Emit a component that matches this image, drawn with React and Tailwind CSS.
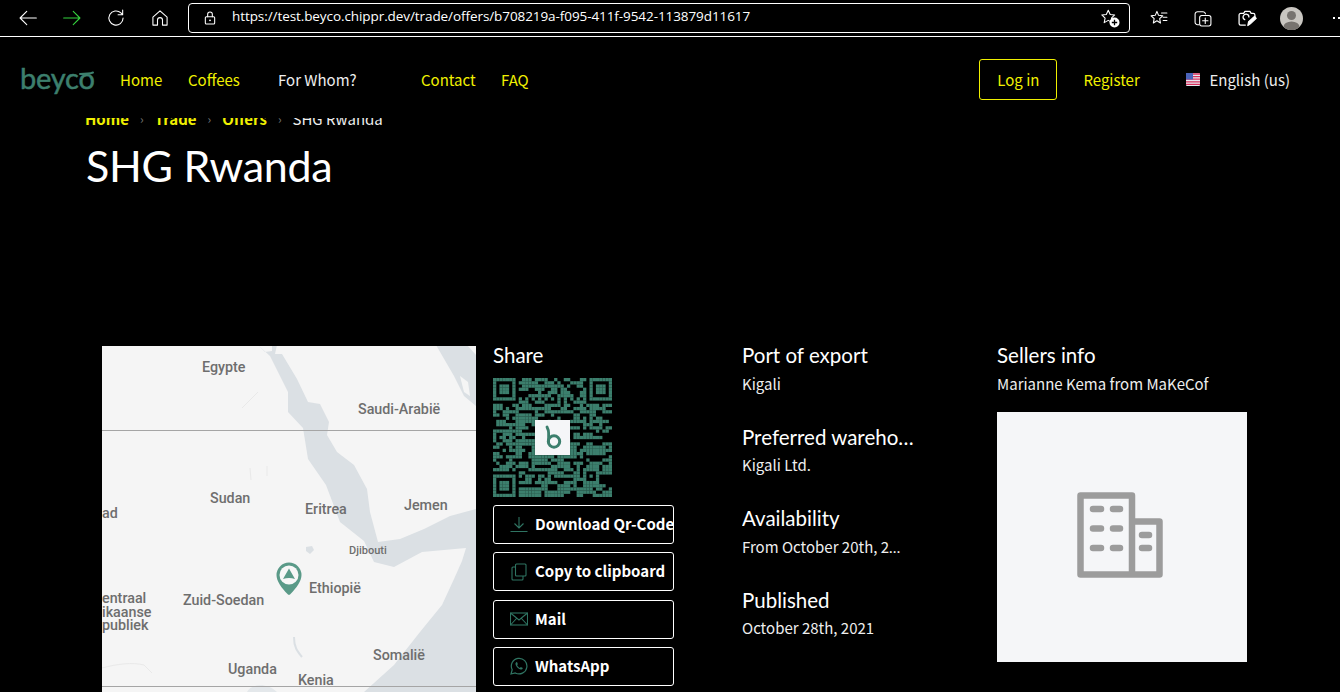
import React from "react";

const sans = "font-['Noto_Sans_CJK_KR','Noto_Sans',sans-serif]";
const head = "font-['Lato',sans-serif]";

const N = 37;
function qrCells() {
  const cells = [];
  let s = 20211028;
  const rnd = () => {
    s = (s * 1664525 + 1013904223) >>> 0;
    return (s >>> 16) / 65536;
  };
  const nearF = (x, y) => (x < 8 && y < 8) || (x >= N - 8 && y < 8) || (x < 8 && y >= N - 8);
  let prev = false;
  for (let y = 0; y < N; y++) {
    for (let x = 0; x < N; x++) {
      if (nearF(x, y)) continue;
      if (x >= 28 && x <= 32 && y >= 28 && y <= 32) {
        const e = x === 28 || x === 32 || y === 28 || y === 32 || (x === 30 && y === 30);
        if (e) cells.push([x, y]);
        continue;
      }
      if (y === 6 || x === 6) {
        if ((x + y) % 2 === 0) cells.push([x, y]);
        continue;
      }
      const on = rnd() < 0.4 ? prev : rnd() > 0.42;
      prev = on;
      if (on) cells.push([x, y]);
    }
  }
  [[0, 0], [N - 7, 0], [0, N - 7]].forEach(([fx, fy]) => {
    for (let y = fy; y < fy + 7; y++)
      for (let x = fx; x < fx + 7; x++) {
        const ring = x === fx || x === fx + 6 || y === fy || y === fy + 6;
        const core = x >= fx + 2 && x <= fx + 4 && y >= fy + 2 && y <= fy + 4;
        if (ring || core) cells.push([x, y]);
      }
  });
  return cells;
}

function QR() {
  return (
    <div className="relative h-[119px] w-[119px]">
      <svg viewBox={`0 0 ${N} ${N}`} className="block h-[119px] w-[119px]">
        {qrCells().map(([x, y]) => (
          <rect key={`${x}-${y}`} x={x} y={y} width="1.02" height="1.02" fill="#3c7f6d" />
        ))}
      </svg>
      <div className="absolute left-[42px] top-[42px] flex h-[35px] w-[35px] items-center justify-center bg-[#f5f6f8]">
        <svg width="35" height="35" viewBox="0 0 35 35" fill="none">
          <path d="M12 7c1 2 1.600 3.500 1.600 6v9" stroke="#3c7f6d" strokeWidth="2.800" strokeLinecap="round" />
          <circle cx="19" cy="21.500" r="5.700" stroke="#3c7f6d" strokeWidth="3" />
        </svg>
      </div>
    </div>
  );
}

const IconStroke = ({ children, size = 20, sw = 1.3, color = "#fff", vb = 24 }) => (
  <svg width={size} height={size} viewBox={`0 0 ${vb} ${vb}`} fill="none" stroke={color} strokeWidth={sw} strokeLinecap="round" strokeLinejoin="round">
    {children}
  </svg>
);

function Toolbar() {
  return (
    <div className="flex h-9 items-center">
      <div className="flex w-[188px] items-center pl-[18px]">
        <div className="w-[44px]">
          <IconStroke size={20}><path d="M22 12H3M10.500 4L2.500 12l8 8" /></IconStroke>
        </div>
        <div className="w-[44px]">
          <IconStroke size={20} color="#35d43e"><path d="M2 12h19M13.500 4l8 8-8 8" /></IconStroke>
        </div>
        <div className="w-[44px]">
          <IconStroke size={20}><path d="M20.500 12a8.500 8.500 0 1 1-2.600-6.100L20 8M20 2.500V8h-5.500" /></IconStroke>
        </div>
        <div>
          <IconStroke size={20}><path d="M3.500 11L12 3.500l8.500 7.500V20.500h-5.500V14.500a3 3 0 0 0-6 0V20.500H3.500z" /></IconStroke>
        </div>
      </div>
      <div className="flex h-[30px] w-[942px] items-center rounded-[4px] border border-white">
        <div className="ml-[13px] w-[30px]">
          <IconStroke size={16} sw={1.600}><rect x="5" y="10" width="14" height="11" rx="1.500" /><path d="M8.500 10V6.500a3.500 3.500 0 0 1 7 0V10" /><circle cx="12" cy="15.500" r=".6" fill="#fff" /></IconStroke>
        </div>
        <span className="pb-[2px] font-['Open_Sans',sans-serif] text-[13.500px] leading-none tracking-[-0.08px] text-white">
          https://test.beyco.chippr.dev/trade/offers/b708219a-f095-411f-9542-113879d11617
        </span>
        <div className="relative ml-auto mr-[9px] h-5 w-5">
          <IconStroke size={18} sw={1.400}><path d="M11 3l2.600 5.600 6 .7-4.400 4.200 1.200 6-5.400-3-5.400 3 1.200-6L2.400 9.300l6-.7z" /></IconStroke>
          <svg className="absolute bottom-0 right-0" width="11" height="11" viewBox="0 0 11 11">
            <circle cx="5.500" cy="5.500" r="5" fill="#fff" />
            <path d="M5.500 2.800v5.400M2.800 5.500h5.400" stroke="#000" strokeWidth="1.300" />
          </svg>
        </div>
      </div>
      <div className="ml-[19px] flex items-center">
        <div className="w-[44px]">
          <IconStroke size={20} sw={1.300}>
            <path d="M9.500 4l2 4.800 5 .5-3.700 3.500 1 5.200-4.300-2.700-4.300 2.700 1-5.200L2.500 9.300l5-.5z" />
            <path d="M15 6h6.500M17 11h4.500M17 15h4.500" />
          </IconStroke>
        </div>
        <div className="w-[44px]">
          <IconStroke size={20} sw={1.300}>
            <path d="M7 20H5.500A3 3 0 0 1 2.500 17V7.500A3 3 0 0 1 5.500 4.500H12a3 3 0 0 1 3 2.500" />
            <rect x="8" y="9" width="13.500" height="12.500" rx="2.500" />
            <path d="M14.700 12v6.500M11.500 15.200H18" />
          </IconStroke>
        </div>
        <div className="w-[43px]">
          <svg width="20" height="20" viewBox="0 0 24 24" fill="none" stroke="#fff" strokeWidth="1.500" strokeLinejoin="round" strokeLinecap="round">
            <path d="M5 6.500h3L9.500 4h6L17 6.500h2.500a2 2 0 0 1 2 2V11M10 20.500H4.500a2 2 0 0 1-2-2V8.500a2 2 0 0 1 2-2" />
            <path d="M9.300 14a3.500 3.500 0 1 1 5-3.200" />
            <path d="M13 21l1-4.500 7-6.500 2 2.500-7 6.500z" fill="#fff" />
          </svg>
        </div>
        <div className="flex h-[23px] w-[23px] items-center justify-center overflow-hidden rounded-full bg-[#c9c6c1]">
          <svg width="23" height="23" viewBox="0 0 23 23">
            <circle cx="11.500" cy="8.500" r="4.500" fill="#77736f" />
            <ellipse cx="11.500" cy="20" rx="8" ry="5.500" fill="#77736f" />
          </svg>
        </div>
        <div className="ml-[30px] flex gap-[3px]">
          <span className="h-[2px] w-[2px] bg-white" />
          <span className="h-[2px] w-[2px] bg-white" />
        </div>
      </div>
    </div>
  );
}

function Logo() {
  return (
    <div className="relative flex h-[40px] w-[99px] items-center pb-[5px] pl-[20px]">
      <span className="font-['Lato',sans-serif] text-[29px] font-normal leading-none tracking-[-0.2px] text-[#3c7f6d] [-webkit-text-stroke:0.5px_#3c7f6d]">beyco</span>
      <svg className="absolute left-[79px] top-[9px]" width="16" height="8" viewBox="0 0 16 8" fill="none">
        <path d="M1 5c4 0 9 0 13-1.500" stroke="#3c7f6d" strokeWidth="2" strokeLinecap="round" />
      </svg>
    </div>
  );
}

function Nav() {
  const y = "text-[#f0f000]";
  const w = "text-[#eeeeee]";
  return (
    <div className={`flex h-[81px] items-center pt-[4px] ${sans} text-[15px] leading-none`}>
      <Logo />
      <span className={`ml-[21px] w-[68px] ${y}`}>Home</span>
      <span className={`w-[90px] ${y}`}>Coffees</span>
      <span className={`w-[143px] ${w}`}>For Whom?</span>
      <span className={`w-[80px] ${y}`}>Contact</span>
      <span className={y}>FAQ</span>
      <div className={`ml-auto flex h-[41px] w-[78px] items-center justify-center rounded-[3px] border border-[#f0f000] ${y}`}>Log in</div>
      <span className={`ml-[26px] w-[103px] ${y}`}>Register</span>
      <svg width="14" height="13" viewBox="0 0 14 13" className="mr-[9px]">
        <rect width="14" height="13" rx="1" fill="#e8e8f0" />
        <path d="M0 1h14M0 3.600h14M0 6.200h14M0 8.800h14M0 11.400h14" stroke="#d8305c" strokeWidth="1.300" />
        <rect width="7" height="6.500" fill="#4a63b8" />
      </svg>
      <span className={`mr-[50px] ${w}`}>English (us)</span>
    </div>
  );
}

function Breadcrumb() {
  const Sep = () => <span className="text-[12px] text-[#777]">›</span>;
  return (
    <div className="h-[9px] overflow-hidden pl-[85px]">
      <div className={`mt-[-10px] flex items-center ${sans} text-[15px] leading-[20px]`}>
        <span className="font-bold text-[#f0f000]">Home</span>
        <span className="mx-[11px]"><Sep /></span>
        <span className="font-bold text-[#f0f000]">Trade</span>
        <span className="mx-[11px]"><Sep /></span>
        <span className="font-bold text-[#f0f000]">Offers</span>
        <span className="mx-[11px]"><Sep /></span>
        <span className="text-[#eeeeee]">SHG Rwanda</span>
      </div>
    </div>
  );
}

const labels = [
  ["Egypte", 100, 14, 14.300],
  ["Saudi-Arabië", 256, 56, 14.300],
  ["Sudan", 108, 145, 14.300],
  ["Eritrea", 203, 156, 14.300],
  ["Jemen", 302, 152, 14.300],
  ["ad", 0, 160, 14.300],
  ["Djibouti", 247, 199, 11],
  ["Ethiopië", 207, 235, 14.300],
  ["Zuid-Soedan", 81, 247, 14.300],
  ["Somalië", 271, 302, 14.300],
  ["Uganda", 126, 316, 14.300],
  ["Kenia", 196, 327, 14.300],
];

function MapPanel() {
  return (
    <div className="relative h-[346px] w-[374px] shrink-0 overflow-hidden bg-[#f5f5f5]">
      <svg className="absolute inset-0" width="374" height="346" viewBox="0 0 374 346">
        <path
          fill="#dbe0e4"
          d="M156 -1L168 10L178 30L186 46L186 66L201 82L206 113L224 139L238 176L262 195L272 216L292 221L320 206L342 204L364 202L360 215L352 233L340 259L318 286L292 319L262 346L374 346L374 163L348 170L322 183L298 193L276 196L268 166L265 143L252 119L235 106L225 89L227 76L218 58L206 56L195 33L180 8L173 8L175 -1L170 -1L170 5L163 6Z"
        />
        <path fill="#dbe0e4" d="M334 -1L352 30L362 50L374 60L374 9L365 -1Z" />
        <path fill="#f5f5f5" d="M358 30L366 36L368 50L362 46Z" />
        <path fill="#dbe0e4" d="M204 201l6 -1l2 4l-4 4l-4 -3z" />
        <path fill="none" stroke="#dbe0e4" strokeWidth="2" d="M192 291c0 10 3 14 8 20" />
        <path fill="#e4e8eb" d="M145 346c3 -8 20 -10 30 0z" />
        <path fill="none" stroke="#e9e9e9" strokeWidth="1" d="M0 322c15 -4 30 -6 42 -3l8 8M140 62l16 -16M148 122l1 12M165 120l0 10" />
        <path d="M0 -0.500H374M0 84.500H374M0 340.500H374" stroke="#a5a5a5" strokeWidth="1" />
      </svg>
      {labels.map(([t, x, y, s]) => (
        <span
          key={t}
          className="absolute whitespace-nowrap font-['Roboto',sans-serif] font-medium leading-none text-[#6e6e6e]"
          style={{ left: x, top: y, fontSize: s }}
        >
          {t}
        </span>
      ))}
      <span className="absolute left-0 top-[246px] font-['Roboto',sans-serif] text-[14.300px] font-medium leading-[13.500px] text-[#6e6e6e]">
        entraal<br />ikaanse<br />publiek
      </span>
      <svg className="absolute left-[174px] top-[216px]" width="26" height="33" viewBox="0 0 26 33">
        <path d="M13 0.500a12.500 12.500 0 0 1 12.500 12.500c0 6-5 13-11 19a2 2 0 0 1-3 0c-6-6-11-13-11-19A12.500 12.500 0 0 1 13 0.500z" fill="#5a9a88" />
        <circle cx="13" cy="13" r="9.500" fill="#f7f7f7" />
        <path d="M13 6.500l6 10.500c-4 -1.500 -8 -1.500 -12 0z" fill="#5a9a88" />
      </svg>
    </div>
  );
}

const btnIcons = {
  download: (
    <svg width="18" height="18" viewBox="0 0 18 18" fill="none" stroke="#2f7462" strokeWidth="1.100">
      <path d="M0.500 15.500H17.500M9 1v11M4.500 7.500L9 12l4.500-4.500" />
    </svg>
  ),
  copy: (
    <svg width="18" height="18" viewBox="0 0 18 18" fill="none" stroke="#2f7462" strokeWidth="1.100">
      <rect x="5.500" y="1" width="10.500" height="12" rx="1" />
      <path d="M5.500 4H3a1 1 0 0 0-1 1v11a1 1 0 0 0 1 1h9a1 1 0 0 0 1-1v-3" />
    </svg>
  ),
  mail: (
    <svg width="18" height="18" viewBox="0 0 18 18" fill="none" stroke="#2f7462" strokeWidth="1.100">
      <rect x="0.500" y="3" width="17" height="12" />
      <path d="M0.500 3L9 10l8.500-7M0.500 15l6-6.500M17.500 15l-6-6.500" />
    </svg>
  ),
  whatsapp: (
    <svg width="18" height="18" viewBox="0 0 18 18" fill="none" stroke="#2f7462" strokeWidth="1.200">
      <path d="M1 17l1.200-4.300A7.800 7.800 0 1 1 5.300 15.900z" />
      <path d="M6.200 5.200c-1 .8-1 2 0 3.800s2.800 3.300 4.400 3.500c1.200.1 2-.6 2.200-1.600l-2-1-.9 1c-1.100-.4-2.300-1.500-2.800-2.800l.8-.9-.9-2.100z" fill="#2f7462" stroke="none" />
    </svg>
  ),
};

function ShareBtn({ icon, children }) {
  return (
    <div className="flex h-[39px] w-[181px] items-center overflow-hidden rounded-[3px] border border-white pl-[16px]">
      <span className="mr-[7px] shrink-0">{btnIcons[icon]}</span>
      <span className={`whitespace-nowrap pb-[2px] ${sans} text-[15px] font-bold leading-none text-white`}>{children}</span>
    </div>
  );
}

function H({ children }) {
  return <div className={`${head} text-[20.500px] leading-[18px] text-white`}>{children}</div>;
}

function Info({ title, value, className = "" }) {
  return (
    <div className={className}>
      <div className={`${head} w-[175px] truncate pb-[2px] text-[20.500px] leading-[18px] text-white`}>{title}</div>
      <div className="mt-[5.500px] w-[164px] truncate font-['Lato',sans-serif] text-[15px] leading-[24px] text-[#eeeeee]">
        <span className={sans}>{value}</span>
      </div>
    </div>
  );
}

export default function App() {
  return (
    <div className="h-[692px] w-[1340px] overflow-hidden bg-black">
      <Toolbar />
      <div className="h-px bg-white" />
      <Nav />
      <Breadcrumb />
      <h1 className={`ml-[86px] mt-[13px] ${head} text-[43px] font-normal leading-[52px] tracking-[-0.3px] text-white`}>SHG Rwanda</h1>
      <div className="ml-[102px] mt-[154px] flex">
        <MapPanel />
        <div className="ml-[17px] w-[249px] shrink-0">
          <H>Share</H>
          <div className="mt-[14px]"><QR /></div>
          <div className="mt-[8px] flex flex-col gap-[8.300px]">
            <ShareBtn icon="download">Download Qr-Code</ShareBtn>
            <ShareBtn icon="copy">Copy to clipboard</ShareBtn>
            <ShareBtn icon="mail">Mail</ShareBtn>
            <ShareBtn icon="whatsapp">WhatsApp</ShareBtn>
          </div>
        </div>
        <div className="w-[255px] shrink-0">
          <Info title="Port of export" value="Kigali" />
          <Info title="Preferred warehouse" value="Kigali Ltd." className="mt-[32px]" />
          <Info title="Availability" value="From October 20th, 2021" className="mt-[32px]" />
          <Info title="Published" value="October 28th, 2021" className="mt-[32px]" />
        </div>
        <div className="shrink-0">
          <H>Sellers info</H>
          <div className={`mt-[8px] ${sans} text-[15px] leading-[24px] text-[#eeeeee]`}>Marianne Kema from MaKeCof</div>
          <div className="mt-[16px] flex h-[250px] w-[250px] items-center justify-center bg-[#f5f6f8] pb-[5px] pr-[5px]">
            <svg width="86" height="86" viewBox="0 0 86 86" fill="none">
              <path d="M3.500 3.500H55V82.500H3.500zM55 29.500H82.500V82.500H55z" stroke="#9c9c9c" strokeWidth="6.500" strokeLinejoin="round" />
              <path d="M16 17h8M36 17h7M16 36.500h8M36 36.500h7M16 56h8M36 56h7M65 43h7M65 56h7" stroke="#9c9c9c" strokeWidth="6.500" strokeLinecap="round" />
            </svg>
          </div>
        </div>
      </div>
    </div>
  );
}
